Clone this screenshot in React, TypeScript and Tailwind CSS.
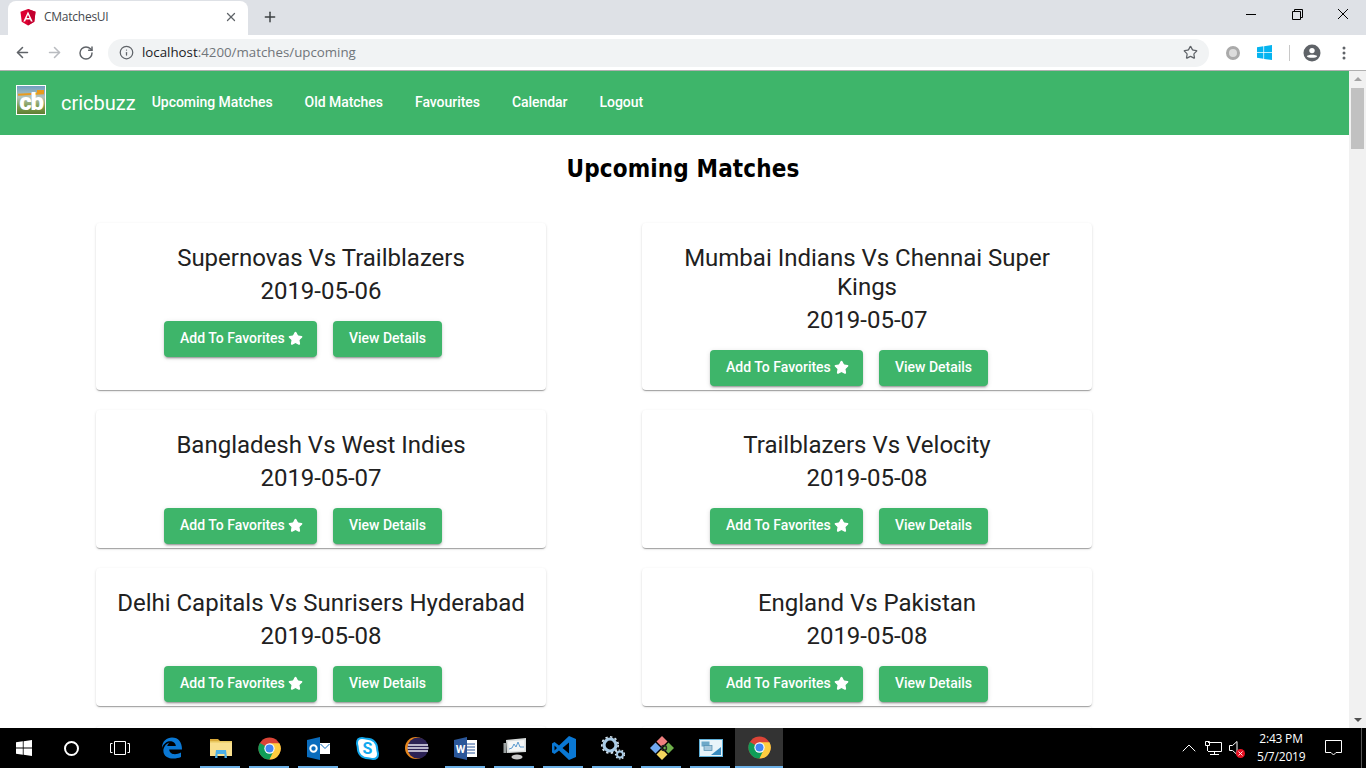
import { Star, X, Plus, ArrowLeft, ArrowRight, RotateCw, Info, ChevronUp } from 'lucide-react'

const matches = [
  { title: 'Supernovas Vs Trailblazers', date: '2019-05-06' },
  { title: 'Mumbai Indians Vs Chennai Super Kings', date: '2019-05-07' },
  { title: 'Bangladesh Vs West Indies', date: '2019-05-07' },
  { title: 'Trailblazers Vs Velocity', date: '2019-05-08' },
  { title: 'Delhi Capitals Vs Sunrisers Hyderabad', date: '2019-05-08' },
  { title: 'England Vs Pakistan', date: '2019-05-08' },
]

const cardShadow = 'shadow-[0_2px_1px_-1px_rgba(0,0,0,0.2),0_1px_1px_0_rgba(0,0,0,0.14),0_1px_3px_0_rgba(0,0,0,0.12)]'

function AngularLogo() {
  return (
    <svg width="16" height="17" viewBox="0 0 16 17">
      <path d="M8 0 L0.5 2.7 L1.7 12.8 L8 16.5 L14.3 12.8 L15.5 2.7 Z" fill="#dd0031" />
      <path d="M8 0 L8 16.5 L14.3 12.8 L15.5 2.7 Z" fill="#c3002f" />
      <path d="M8 2.4 L3.3 12.6 H5.1 L6 10.4 H10 L10.9 12.6 H12.7 Z M9.4 9 H6.6 L8 5.7 Z" fill="#fff" />
    </svg>
  )
}

function WinLogo({ color, size }: { color: string; size: number }) {
  return (
    <svg width={size} height={size} viewBox="0 0 16 16">
      <path d="M0 2.3 L6.8 1.3 V7.6 H0 Z M7.6 1.2 L16 0 V7.6 H7.6 Z M0 8.4 H6.8 V14.7 L0 13.7 Z M7.6 8.4 H16 V16 L7.6 14.8 Z" fill={color} />
    </svg>
  )
}

function ChromeLogo() {
  return (
    <svg width="23" height="23" viewBox="0 0 24 24">
      <circle cx="12" cy="12" r="11.5" fill="#db4437" />
      <path d="M12 12 L2 6.2 A11.5 11.5 0 0 0 12 23.5 L17.7 13.5 Z" fill="#0f9d58" />
      <path d="M12 6.5 H22.4 A11.5 11.5 0 0 1 12 23.5 L17 13 Z" fill="#ffcd40" />
      <circle cx="12" cy="12" r="5.4" fill="#fff" />
      <circle cx="12" cy="12" r="4.2" fill="#4285f4" />
    </svg>
  )
}

function TabStrip() {
  return (
    <div className="flex h-[35px] items-end bg-[#dee1e6]">
      <div className="ml-[8px] flex h-[34px] w-[240px] items-center rounded-t-lg bg-white pb-[2px] pl-[12px] pr-[10px]">
        <AngularLogo />
        <span className="ml-[8px] flex-1 text-[12px] tracking-[-0.25px] text-[#45494e] [font-family:'Open_Sans',sans-serif]">CMatchesUI</span>
        <X size={14} strokeWidth={2.2} className="text-[#5f6368]" />
      </div>
      <Plus size={16} strokeWidth={2.2} className="mb-[10px] ml-[14px] text-[#3c4043]" />
      <div className="mb-[11px] ml-auto flex h-[20px] items-center">
        <svg width="10" height="1" viewBox="0 0 10 1" className="mr-[36px]">
          <path d="M0 0.5 H10" stroke="#000" />
        </svg>
        <svg width="11" height="11" viewBox="0 0 11 11" fill="none" stroke="#000" className="mr-[35px]">
          <path d="M0.5 2.5 H8.5 V10.5 H0.5 Z M2.5 2.5 V0.5 H10.5 V8.5 H8.5" />
        </svg>
        <svg width="10" height="10" viewBox="0 0 10 10" stroke="#000" className="mr-[18px]">
          <path d="M0 0 L10 10 M10 0 L0 10" />
        </svg>
      </div>
    </div>
  )
}

function Toolbar() {
  return (
    <div className="flex h-[36px] items-center border-b border-[#b0b0b0] bg-white">
      <ArrowLeft size={17} strokeWidth={2.2} className="ml-[14px] text-[#5f6368]" />
      <ArrowRight size={17} strokeWidth={2.2} className="ml-[15px] text-[#b9bcc0]" />
      <RotateCw size={16} strokeWidth={2.2} className="ml-[15px] text-[#5f6368]" />
      <div className="ml-[14px] flex h-[28px] w-[1101px] items-center rounded-full bg-[#f1f3f4] pl-[11px] pr-[11px]">
        <Info size={15} strokeWidth={2} className="text-[#5f6368]" />
        <span className="ml-[8px] flex-1 text-[13.3px] text-[#70757a] [font-family:'Open_Sans',sans-serif]">
          <span className="text-[#202124]">localhost</span>:4200/matches/upcoming
        </span>
        <Star size={15} strokeWidth={2} className="text-[#5f6368]" />
      </div>
      <div className="ml-[17px] h-[14px] w-[14px] rounded-full border-[3px] border-[#aaaaaa] bg-[#dcdcdc]" />
      <div className="ml-[17px]"><WinLogo color="#05b4f0" size={15} /></div>
      <div className="ml-[17px] h-[16px] w-px bg-[#c8c8c8]" />
      <svg width="18" height="18" viewBox="0 0 18 18" className="ml-[13px]">
        <circle cx="9" cy="9" r="8.5" fill="#5f6368" />
        <circle cx="9" cy="6.6" r="2.7" fill="#fff" />
        <path d="M3.8 12.2 C5 10.2 13 10.2 14.2 12.2 C13 14.2 5 14.2 3.8 12.2 Z" fill="#fff" />
      </svg>
      <svg width="4" height="14" viewBox="0 0 4 14" fill="#5f6368" className="ml-[21px]">
        <circle cx="2" cy="2" r="1.5" />
        <circle cx="2" cy="7" r="1.5" />
        <circle cx="2" cy="12" r="1.5" />
      </svg>
    </div>
  )
}

function NavBar() {
  return (
    <nav className="flex h-[64px] items-center bg-[#3eb56a] text-white">
      <div className="relative mb-[7px] ml-[16px] flex h-[30px] w-[30px] items-end justify-center border border-white bg-[linear-gradient(#6f9fc0,#b4c4bc_40%,#7d9a4c_75%,#5f7f33)]">
        <span className="absolute top-[4px] left-[20px] h-[3px] w-[7px] bg-[#e89b1e]" />
        <span className="absolute top-[7px] left-[1px] h-[2px] w-[26px] -rotate-3 bg-[#e89b1e]" />
        <span className="relative mb-[2px] text-[24px] font-black leading-[20px] tracking-[-1.2px] text-white">cb</span>
      </div>
      <span className="ml-[15px] text-[20px]">cricbuzz</span>
      <div className="mb-[2px] ml-[16px] flex gap-[32px] text-[14px] font-medium tracking-[-0.04px]">
        <span>Upcoming Matches</span>
        <span>Old Matches</span>
        <span>Favourites</span>
        <span>Calendar</span>
        <span>Logout</span>
      </div>
    </nav>
  )
}

const buttonClass = 'flex h-[36px] items-center rounded bg-[#3eb56a] pb-[2px] text-[14px] font-medium text-white shadow-[0_3px_1px_-2px_rgba(0,0,0,0.2),0_2px_2px_0_rgba(0,0,0,0.14),0_1px_5px_0_rgba(0,0,0,0.12)]'

function MatchCard({ title, date }: { title: string; date: string }) {
  return (
    <div className={`flex w-[450px] flex-col rounded bg-white px-[16px] pt-[21px] pb-[4px] text-center text-[#212121] ${cardShadow}`}>
      <div className="text-[24px] leading-[29px]">{title}</div>
      <div className="mt-[4px] text-[24px] leading-[29px]">{date}</div>
      <div className="mt-[15px] flex justify-center gap-[16px] pr-[36px]">
        <button type="button" className={`${buttonClass} w-[153px] pl-[16px]`}>
          Add To Favorites
          <Star size={15} fill="currentColor" className="ml-[3px]" />
        </button>
        <button type="button" className={`${buttonClass} w-[109px] justify-center`}>View Details</button>
      </div>
    </div>
  )
}

function Scrollbar() {
  return (
    <div className="flex w-[17px] shrink-0 flex-col items-center bg-[#f1f1f1]">
      <div className="mt-[6px] h-0 w-0 border-x-[4px] border-b-[4px] border-x-transparent border-b-[#a3a3a3]" />
      <div className="mt-[7px] h-[61px] w-[13px] bg-[#c1c1c1]" />
      <div className="mt-auto mb-[6px] h-0 w-0 border-x-[4px] border-t-[4px] border-x-transparent border-t-[#505050]" />
    </div>
  )
}

function EdgeIcon() {
  return (
    <svg width="22" height="22" viewBox="0 0 22 22">
      <path d="M1 11 C1 4 6 0.5 11 0.5 C17.5 0.5 21 5 21 12.5 H8.2 C8.5 17.5 14.5 18.5 20 15.5 V20 C13 23 1 22 2.5 12 C3.5 8.5 5.5 6.5 8.5 5.5 C7 7 6.5 8 6.2 9 H14.8 C15 5 9 2.5 5 5.5 C3 7 1.5 9 1 11 Z" fill="#0a78d4" />
    </svg>
  )
}

function FolderIcon() {
  return (
    <svg width="22" height="20" viewBox="0 0 22 20">
      <path d="M0 1 H8 L10 3 H21 V4 H0 Z" fill="#d9a93a" />
      <rect x="0" y="3" width="22" height="15" fill="#f9e08e" />
      <rect x="0" y="3" width="22" height="1.5" fill="#e8c860" />
      <path d="M6 12 H16 L17 20 H14.5 V16 H7.5 V20 H5 Z" fill="#4db0e8" />
    </svg>
  )
}

function OutlookIcon() {
  return (
    <svg width="23" height="23" viewBox="0 0 23 23">
      <path d="M0 3 L13 0 V23 L0 20 Z" fill="#0a6cbd" />
      <circle cx="6.5" cy="11.5" r="3.2" fill="none" stroke="#fff" strokeWidth="2" />
      <rect x="13" y="6" width="10" height="11" fill="#fff" />
      <path d="M13.5 7 L18 11.5 L22.5 7" fill="none" stroke="#0a6cbd" />
    </svg>
  )
}

function SkypeIcon() {
  return (
    <svg width="23" height="23" viewBox="0 0 23 23">
      <path d="M6 1 C8 1 9 1.8 11 1.8 C17 1.8 21.2 6 21.2 12 C21.2 14 22 15 22 17 C22 20 20 22 17 22 C15 22 14 21.2 12 21.2 C6 21.2 1.8 17 1.8 11 C1.8 9 1 8 1 6 C1 3 3 1 6 1 Z" fill="#fff" stroke="#12a9ef" strokeWidth="2" />
      <text x="11.5" y="17" textAnchor="middle" fontSize="16" fontWeight="700" fill="#12a9ef" fontFamily="Roboto, sans-serif">S</text>
    </svg>
  )
}

function EclipseIcon() {
  return (
    <svg width="24" height="24" viewBox="0 0 24 24">
      <circle cx="11" cy="12" r="11" fill="#e8871e" />
      <circle cx="13" cy="12" r="10.5" fill="#2c2255" />
      <path d="M3 9 H23 M2.5 12 H23.5 M3 15 H23" stroke="#e8e6f2" strokeWidth="1.4" />
    </svg>
  )
}

function WordIcon() {
  return (
    <svg width="23" height="23" viewBox="0 0 23 23">
      <rect x="10" y="3" width="13" height="17" fill="#fff" />
      <path d="M13 7 H21 M13 10 H21 M13 13 H21 M13 16 H21" stroke="#2b579a" />
      <path d="M0 3 L13 0 V23 L0 20 Z" fill="#2b579a" />
      <text x="6.5" y="16" textAnchor="middle" fontSize="11" fontWeight="700" fill="#fff" fontFamily="Roboto, sans-serif">W</text>
    </svg>
  )
}

function MonitorIcon() {
  return (
    <svg width="24" height="24" viewBox="0 0 24 24">
      <path d="M3 4 L23 2 V16 L4 17 Z" fill="#d8dcdc" />
      <path d="M5 5.5 L21.5 4 V14.5 L6 15.5 Z" fill="#f4f6f6" />
      <path d="M6 13 L9 12 L11 8 L13 11 L15 6 L17 11 L21 11" fill="none" stroke="#5a9ad0" />
      <rect x="0.5" y="7" width="3" height="10" fill="#9aa0a0" />
      <ellipse cx="14" cy="21" rx="5.5" ry="2.5" fill="#c8c8c8" />
    </svg>
  )
}

function CodeIcon() {
  return (
    <svg width="24" height="24" viewBox="0 0 24 24">
      <path d="M17 0 L24 3 V21 L17 24 L7 14.5 L2.5 18 L0 16.5 V7.5 L2.5 6 L7 9.5 Z M17 6.5 L10.5 12 L17 17.5 Z M2.5 9.5 V14.5 L5 12 Z" fill="#0a78d4" fillRule="evenodd" />
    </svg>
  )
}

function GearsIcon() {
  return (
    <svg width="24" height="24" viewBox="0 0 24 24" fill="none">
      <circle cx="9" cy="9" r="6" stroke="#a9cbe6" strokeWidth="3.2" />
      <circle cx="9" cy="9" r="8.2" stroke="#d6e6f2" strokeWidth="1.6" strokeDasharray="2.4 2.4" />
      <circle cx="19" cy="18.5" r="3" stroke="#a9cbe6" strokeWidth="2" />
      <circle cx="19" cy="18.5" r="4.5" stroke="#d6e6f2" strokeWidth="1.2" strokeDasharray="1.6 1.6" />
    </svg>
  )
}

function GitIcon() {
  return (
    <svg width="24" height="24" viewBox="0 0 24 24">
      <path d="M12 0 L17.5 5.5 L12 11 L6.5 5.5 Z" fill="#ee7f7f" />
      <path d="M13 12 L18.5 6.5 L24 12 L18.5 17.5 Z" fill="#6fb04a" />
      <path d="M12 13 L17.5 18.5 L12 24 L6.5 18.5 Z" fill="#f4d65e" />
      <path d="M0 12 L5.5 6.5 L11 12 L5.5 17.5 Z" fill="#6fa8f0" />
      <circle cx="14" cy="12" r="2.5" fill="none" stroke="#222" strokeWidth="1.4" />
    </svg>
  )
}

function SqlIcon() {
  return (
    <svg width="24" height="18" viewBox="0 0 24 18">
      <rect x="0.5" y="0.5" width="23" height="17" fill="#e8f4fa" stroke="#5fb0d8" />
      <rect x="2.5" y="2.5" width="8" height="5" fill="#6ea8c8" />
      <rect x="5" y="6.5" width="8" height="5" fill="#a8c8dc" stroke="#4e8cb0" strokeWidth="0.7" />
      <path d="M12 16 L22 16 L22 8 Z" fill="#3a8cc0" />
    </svg>
  )
}

function Tray() {
  return (
    <>
      <ChevronUp size={24} strokeWidth={1} className="ml-auto" />
      <svg width="17" height="14" viewBox="0 0 17 14" fill="none" stroke="#fff" className="ml-[4px]">
        <path d="M3 1.5 H16.5 V10.5 H3 M9.5 10.5 V13.5 M5 13.5 H14 M0.5 0.5 H4.5 V4.5 H0.5 Z M2.5 4.5 V10" />
      </svg>
      <div className="relative ml-[7px] h-[14px] w-[16px]">
        <svg width="10" height="14" viewBox="0 0 10 14" fill="none" stroke="#fff"><path d="M0.5 4.5 H3.5 L8 0.5 V13.5 L3.5 9.5 H0.5 Z" /></svg>
        <span className="absolute right-0 bottom-[-3px] flex h-[9px] w-[9px] items-center justify-center rounded-full bg-[#e81123]">
          <X size={7} strokeWidth={3} className="text-white" />
        </span>
      </div>
      <div className="ml-[12px] w-[48px] text-center text-[12px] leading-[18px] tracking-[-0.2px]">
        <div>2:43 PM</div>
        <div>5/7/2019</div>
      </div>
      <svg width="17" height="16" viewBox="0 0 17 16" fill="none" stroke="#fff" className="ml-[20px]">
        <path d="M0.5 0.5 H16.5 V12.5 H11 L8.5 15 L6 12.5 H0.5 Z" />
      </svg>
      <div className="ml-[19px] h-[40px] w-px bg-[#555555]" />
      <div className="w-[4px]" />
    </>
  )
}

function Taskbar() {
  const apps = [
    { key: 'edge', icon: <EdgeIcon />, open: false },
    { key: 'files', icon: <FolderIcon />, open: true },
    { key: 'chrome', icon: <ChromeLogo />, open: true },
    { key: 'outlook', icon: <OutlookIcon />, open: true },
    { key: 'skype', icon: <SkypeIcon />, open: false },
    { key: 'eclipse', icon: <EclipseIcon />, open: false },
    { key: 'word', icon: <WordIcon />, open: true },
    { key: 'monitor', icon: <MonitorIcon />, open: true },
    { key: 'code', icon: <CodeIcon />, open: true },
    { key: 'gears', icon: <GearsIcon />, open: true },
    { key: 'git', icon: <GitIcon />, open: true },
    { key: 'sql', icon: <SqlIcon />, open: true },
  ]
  return (
    <div className="flex h-[40px] items-center bg-black text-white [font-family:'Open_Sans',sans-serif]">
      <div className="ml-[16px]"><WinLogo color="#fff" size={16} /></div>
      <div className="ml-[32px] h-[15px] w-[15px] rounded-full border-2 border-white" />
      <svg width="20" height="14" viewBox="0 0 20 14" fill="none" stroke="#fff" className="ml-[31px]">
        <path d="M4.5 0.5 H15.5 V13.5 H4.5 Z M2.5 2.5 H0.5 V11.5 H2.5 M17.5 2.5 H19.5 V11.5 H17.5" />
      </svg>
      <div className="ml-[17px] flex">
        {apps.map((a) => (
          <div key={a.key} className="relative flex h-[40px] w-[49px] items-center justify-center">
            {a.icon}
            {a.open && <span className="absolute bottom-0 left-[4px] h-[2px] w-[40px] bg-[#6cb0e6]" />}
          </div>
        ))}
      </div>
      <div className="flex h-[40px] w-[48px] items-center justify-center border-b-2 border-[#6cb0e6] bg-[#333333]">
        <ChromeLogo />
      </div>
      <Tray />
    </div>
  )
}

export default function App() {
  return (
    <div className="flex h-screen flex-col overflow-hidden bg-white [font-family:Roboto,sans-serif]">
      <TabStrip />
      <Toolbar />
      <div className="flex min-h-0 flex-1">
        <div className="min-w-0 flex-1 overflow-hidden">
          <NavBar />
          <h2 className="mt-[18px] ml-[17px] text-center text-[24px] font-bold leading-[33px] tracking-[0.12px] text-black [font-family:'DejaVu_Sans_Condensed','DejaVu_Sans',sans-serif]">Upcoming Matches</h2>
          <div className="mt-[37px] ml-[96px] grid w-[996px] grid-cols-[450px_450px] gap-x-[96px] gap-y-[20px]">
            {matches.map((m) => (
              <MatchCard key={m.title} title={m.title} date={m.date} />
            ))}
            <div className={`h-[30px] rounded bg-white ${cardShadow}`} />
            <div className={`h-[30px] rounded bg-white ${cardShadow}`} />
          </div>
        </div>
        <Scrollbar />
      </div>
      <Taskbar />
    </div>
  )
}
